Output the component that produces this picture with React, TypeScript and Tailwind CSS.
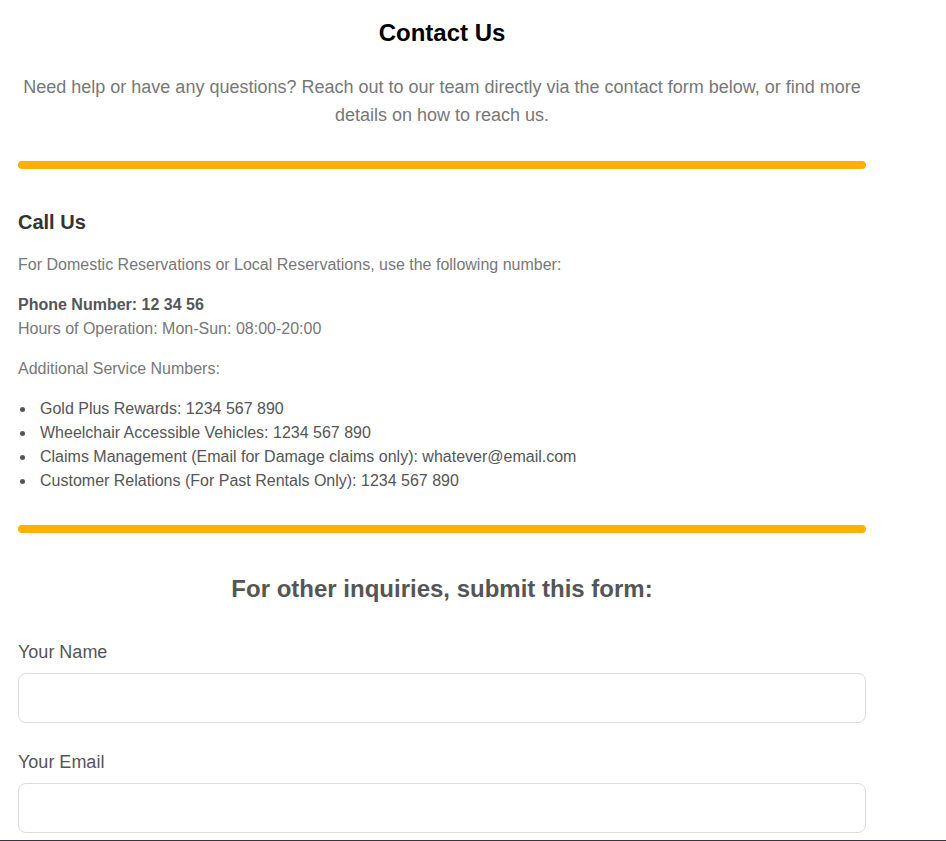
import React from 'react';

const services = [
  'Gold Plus Rewards: 1234 567 890',
  'Wheelchair Accessible Vehicles: 1234 567 890',
  'Claims Management (Email for Damage claims only): whatever@email.com',
  'Customer Relations (For Past Rentals Only): 1234 567 890',
];

const Divider = () => <div className="h-[8px] w-full rounded-full bg-[#ffb000]" />;

const Field: React.FC<{ label: string; type?: string }> = ({ label, type = 'text' }) => (
  <div>
    <label className="block text-[18px] leading-[22px] text-[#555]">{label}</label>
    <input
      type={type}
      className="mt-[10px] block h-[50px] w-full rounded-[8px] border border-[#ddd] bg-white px-3 outline-none"
    />
  </div>
);

export default function App() {
  return (
    <div className="min-h-[841px] bg-white font-['Liberation_Sans',Arial,sans-serif]">
      <div className="ml-[18px] w-[848px] pt-[19px]">
        <h1 className="text-center text-[24px] font-bold leading-[28px] text-black">Contact Us</h1>
        <p className="mt-[26px] text-center text-[18px] leading-[28px] text-[#777]">
          Need help or have any questions? Reach out to our team directly via the contact form below, or find more details on how to reach us.
        </p>
        <div className="mt-[32px]">
          <Divider />
        </div>

        <section className="mt-[41px]">
          <h2 className="text-[20px] font-bold leading-[24px] text-[#333]">Call Us</h2>
          <p className="mt-[19px] text-[16px] leading-[24px] text-[#777]">
            For Domestic Reservations or Local Reservations, use the following number:
          </p>
          <p className="mt-[16px] text-[16px] leading-[24px] text-[#777]">
            <strong className="font-bold text-[#555]">Phone Number: 12 34 56</strong>
            <br />
            Hours of Operation: Mon-Sun: 08:00-20:00
          </p>
          <p className="mt-[16px] text-[16px] leading-[24px] text-[#777]">Additional Service Numbers:</p>
          <ul className="mt-[16px] text-[16px] leading-[24px] text-[#555]">
            {services.map((s) => (
              <li key={s} className="flex items-center">
                <span className="ml-[2px] mr-[15px] h-[5px] w-[5px] shrink-0 rounded-full bg-[#555]" />
                {s}
              </li>
            ))}
          </ul>
        </section>

        <div className="mt-[32px]">
          <Divider />
        </div>

        <h2 className="mt-[42px] text-center text-[24px] font-bold leading-[28px] text-[#555]">
          For other inquiries, submit this form:
        </h2>

        <form className="mt-[38px] space-y-[28px]">
          <Field label="Your Name" />
          <Field label="Your Email" type="email" />
        </form>
      </div>
      <div className="mt-[7px] h-px w-full bg-[#3b3442]" />
    </div>
  );
}
